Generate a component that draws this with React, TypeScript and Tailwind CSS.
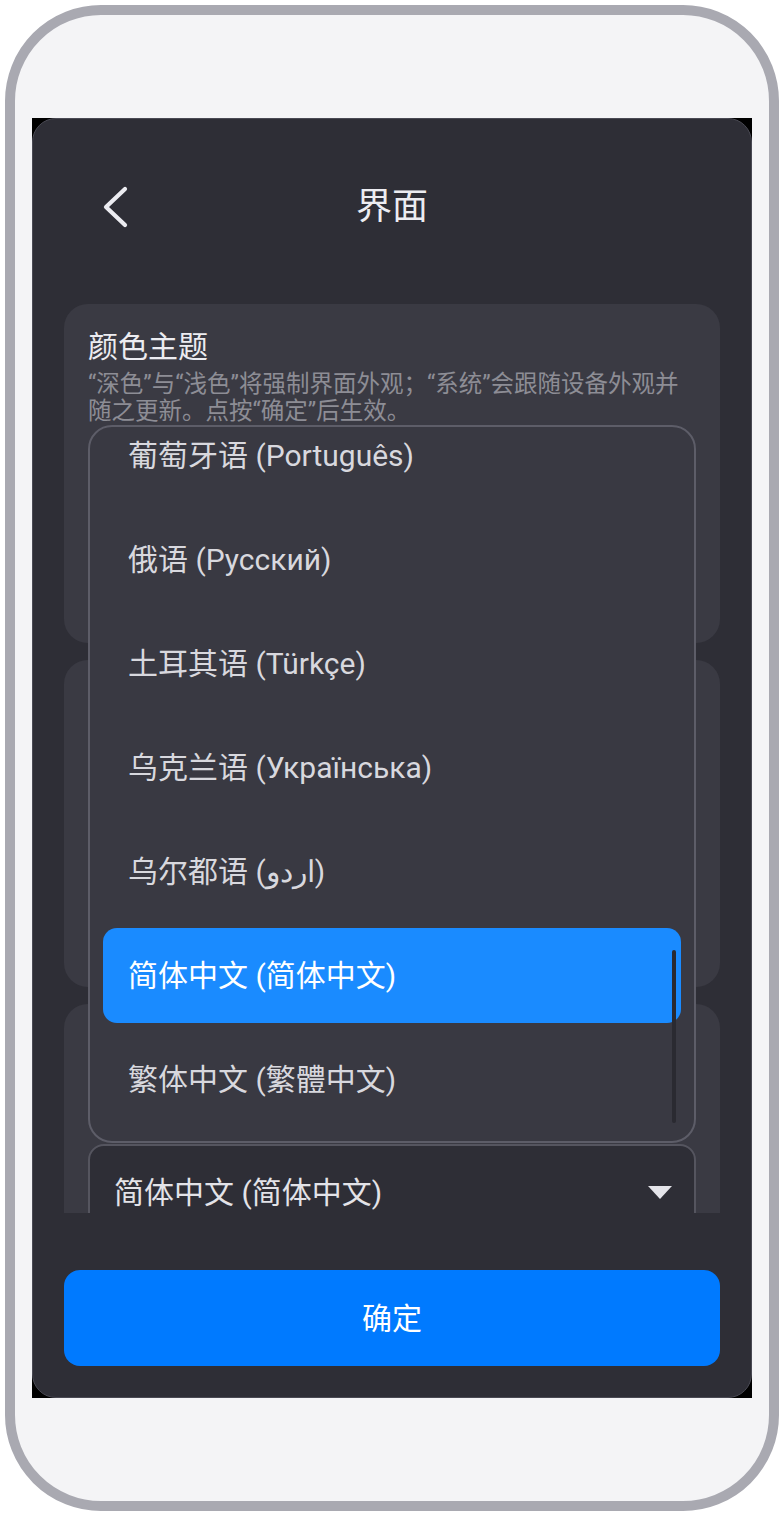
const languages = [
  '葡萄牙语 (Português)',
  '俄语 (Русский)',
  '土耳其语 (Türkçe)',
  '乌克兰语 (Українська)',
  '乌尔都语 (اردو)',
  '简体中文 (简体中文)',
  '繁体中文 (繁體中文)',
];

const selected = '简体中文 (简体中文)';

function BackIcon() {
  return (
    <svg width="26" height="42" viewBox="0 0 26 42" fill="none">
      <path d="M23 3 L4 21 L23 39" stroke="#ececf1" strokeWidth="4.2" strokeLinecap="round" strokeLinejoin="round" />
    </svg>
  );
}

/**
 * Language dropdown - opened list sits above the select trigger
 */
function LanguageSelect() {
  return (
    <div className="relative">
      <div className="absolute left-0 right-0 bottom-[calc(100%+1px)] h-[718px] rounded-[24px] border-2 border-[#5d5d68] bg-[#393942] overflow-hidden">
        <div className="-mt-[19px] px-[13px] flex flex-col gap-[9px]">
          {languages.map((lang) => (
            <div
              key={lang}
              className={`h-[95px] shrink-0 flex items-center pl-[25px] rounded-[14px] text-[30px] ${
                lang === selected ? 'bg-[#1a8bff] text-white' : 'text-[#d8d8de]'
              }`}
            >
              {lang}
            </div>
          ))}
        </div>
        {/* scrollbar */}
        <div className="absolute right-[18px] top-[523px] w-[4px] h-[173px] rounded-full bg-[#2a2a31]" />
      </div>

      <div className="h-[96px] rounded-[16px] border-2 border-[#55555f] bg-[#2e2e36] flex items-center justify-between pl-[24px] pr-[22px]">
        <span className="text-[30px] text-[#e3e3e8]">{selected}</span>
        <svg width="24" height="13" viewBox="0 0 24 13">
          <path d="M0 0 H24 L12 13 Z" fill="#e5e5ea" />
        </svg>
      </div>
    </div>
  );
}

export default function App() {
  return (
    <div className="min-h-[1516px] w-full bg-white p-[5px] font-['Roboto','Noto_Sans_CJK_SC',sans-serif]">
      <div className="h-[1506px] rounded-[96px] border-[10px] border-[#a9a9b1] bg-[#f4f4f6] px-[17px] pt-[103px]">
        <div className="h-[1280px] bg-black">
          <div className="h-full flex flex-col rounded-[24px] border border-[#4a4a54] bg-[#2e2e36] overflow-hidden">
            {/* Header */}
            <div className="h-[176px] shrink-0 grid grid-cols-[1fr_auto_1fr] items-center">
              <div className="pl-[69px] flex items-center">
                <BackIcon />
              </div>
              <h1 className="text-[36px] text-[#ececf1] leading-none">界面</h1>
              <div />
            </div>

            {/* Settings */}
            <div className="flex-1 overflow-hidden px-[31px] pt-[9px]">
              <div className="h-[339px] rounded-[24px] bg-[#3a3a43] px-6 pt-[25px]">
                <h2 className="text-[30px] leading-[36px] text-[#ececf1]">颜色主题</h2>
                <p className="mt-[6px] text-[23.5px] leading-[27px] text-[#8d8d95]">
                  “深色”与“浅色”将强制界面外观；“系统”会跟随设备外观并随之更新。点按“确定”后生效。
                </p>
              </div>

              <div className="mt-[17px] h-[327px] rounded-[24px] bg-[#3a3a43]" />

              <div className="mt-[17px] h-[330px] rounded-[24px] bg-[#3a3a43] px-[24px] pt-[140px]">
                <LanguageSelect />
              </div>
            </div>

            {/* Footer */}
            <div className="h-[184px] shrink-0 px-[31px] pt-[57px]">
              <button className="w-full h-[96px] rounded-[16px] bg-[#007aff] text-[30px] text-white">
                确定
              </button>
            </div>
          </div>
        </div>
      </div>
    </div>
  );
}
